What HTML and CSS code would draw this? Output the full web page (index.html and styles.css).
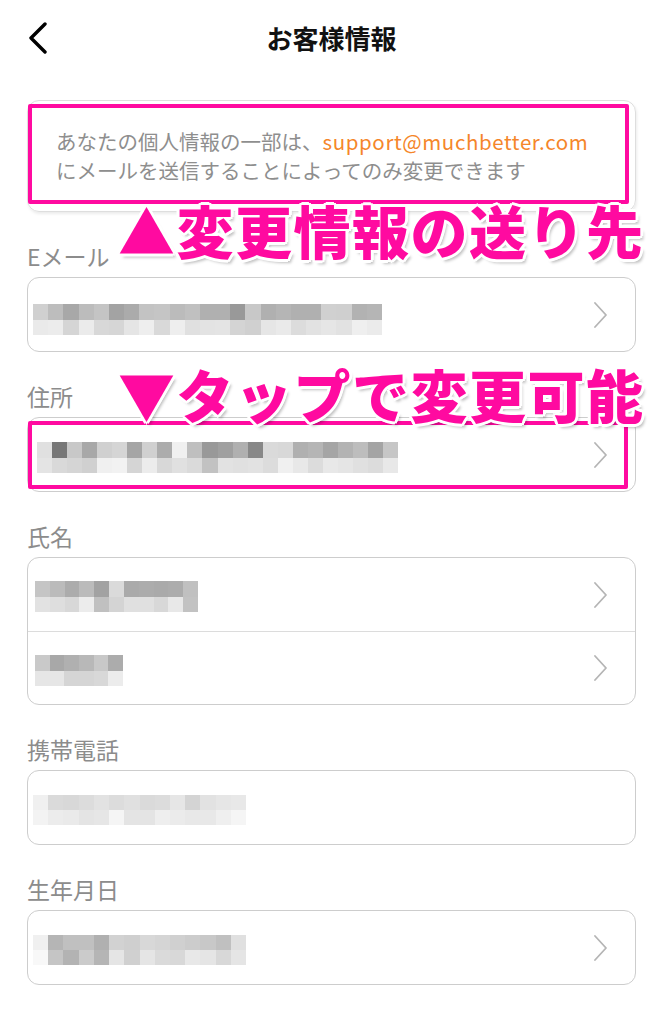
FILE: index.html
```html
<!DOCTYPE html>
<html lang="ja">

<head>
  <meta charset="UTF-8">
  <title>お客様情報</title>
  <link rel="stylesheet" href="styles.css">
</head>

<body>
  <div class="page">
    <header class="header">
      <svg class="back" width="20" height="32" viewBox="0 0 20 32">
        <polyline points="17,2 3,16 17,30" fill="none" stroke="#000" stroke-width="3.4" stroke-linecap="round" stroke-linejoin="round" />
      </svg>
      <h1 class="title">お客様情報</h1>
    </header>

    <main class="content">
      <!-- お知らせ -->
      <div class="notice">
        <p>あなたの個人情報の一部は、<span class="mail">support@muchbetter.com</span><br>にメールを送信することによってのみ変更できます</p>
        <div class="mark mark_notice"></div>
      </div>

      <section class="group">
        <h2 class="label">Eメール</h2>
        <div class="field">
          <div class="row">
            <svg class="mosaic" width="349" height="31" viewBox="0 0 23 2" preserveAspectRatio="none" shape-rendering="crispEdges">
              <rect x="0" y="0" width="1" height="1" fill="#d0d0d0"/><rect x="1" y="0" width="1" height="1" fill="#bdbdbd"/><rect x="2" y="0" width="1" height="1" fill="#a8a8a8"/><rect x="3" y="0" width="1" height="1" fill="#bcbcbc"/><rect x="4" y="0" width="1" height="1" fill="#c4c4c4"/><rect x="5" y="0" width="1" height="1" fill="#a3a3a3"/><rect x="6" y="0" width="1" height="1" fill="#ababab"/><rect x="7" y="0" width="1" height="1" fill="#c3c3c3"/><rect x="8" y="0" width="1" height="1" fill="#c5c5c5"/><rect x="9" y="0" width="1" height="1" fill="#bbbbbb"/><rect x="10" y="0" width="1" height="1" fill="#c0c0c0"/><rect x="11" y="0" width="1" height="1" fill="#b0b0b0"/>
              <rect x="12" y="0" width="1" height="1" fill="#b0b0b0"/><rect x="13" y="0" width="1" height="1" fill="#999999"/><rect x="14" y="0" width="1" height="1" fill="#c8c8c8"/><rect x="15" y="0" width="1" height="1" fill="#b0b0b0"/><rect x="16" y="0" width="1" height="1" fill="#b5b5b5"/><rect x="17" y="0" width="1" height="1" fill="#b0b0b0"/><rect x="18" y="0" width="1" height="1" fill="#b0b0b0"/><rect x="19" y="0" width="1" height="1" fill="#d0d0d0"/><rect x="20" y="0" width="1" height="1" fill="#cfcfcf"/><rect x="21" y="0" width="1" height="1" fill="#b2b2b2"/><rect x="22" y="0" width="1" height="1" fill="#b5b5b5"/>
              <rect x="0" y="1" width="1" height="1" fill="#eaeaea"/><rect x="1" y="1" width="1" height="1" fill="#ececec"/><rect x="2" y="1" width="1" height="1" fill="#d5d5d5"/><rect x="3" y="1" width="1" height="1" fill="#ebebeb"/><rect x="4" y="1" width="1" height="1" fill="#d8d8d8"/><rect x="5" y="1" width="1" height="1" fill="#d6d6d6"/><rect x="6" y="1" width="1" height="1" fill="#e5e5e5"/><rect x="7" y="1" width="1" height="1" fill="#eeeeee"/><rect x="8" y="1" width="1" height="1" fill="#d9d9d9"/><rect x="9" y="1" width="1" height="1" fill="#eeeeee"/><rect x="10" y="1" width="1" height="1" fill="#e0e0e0"/><rect x="11" y="1" width="1" height="1" fill="#e3e3e3"/>
              <rect x="12" y="1" width="1" height="1" fill="#e4e4e4"/><rect x="13" y="1" width="1" height="1" fill="#d4d4d4"/><rect x="14" y="1" width="1" height="1" fill="#d0d0d0"/><rect x="15" y="1" width="1" height="1" fill="#e6e6e6"/><rect x="16" y="1" width="1" height="1" fill="#eaeaea"/><rect x="17" y="1" width="1" height="1" fill="#dcdcdc"/><rect x="18" y="1" width="1" height="1" fill="#e2e2e2"/><rect x="19" y="1" width="1" height="1" fill="#e6e6e6"/><rect x="20" y="1" width="1" height="1" fill="#e2e2e2"/><rect x="21" y="1" width="1" height="1" fill="#efefef"/><rect x="22" y="1" width="1" height="1" fill="#ebebeb"/>
            </svg>
            <svg class="chevron" width="14" height="26" viewBox="0 0 14 26"><polyline points="2,1 13,13 2,25" fill="none" stroke="#b5b5b5" stroke-width="1.8" stroke-linecap="round" stroke-linejoin="round" /></svg>
          </div>
        </div>
      </section>

      <section class="group">
        <h2 class="label">住所</h2>
        <div class="field">
          <div class="row">
            <svg class="mosaic mosaic_addr" width="361" height="31" viewBox="0 0 24 2" preserveAspectRatio="none" shape-rendering="crispEdges">
              <rect x="0" y="0" width="1" height="1" fill="#e0e0e0"/><rect x="1" y="0" width="1" height="1" fill="#777777"/><rect x="2" y="0" width="1" height="1" fill="#c8c8c8"/><rect x="3" y="0" width="1" height="1" fill="#a8a8a8"/><rect x="4" y="0" width="1" height="1" fill="#d0d0d0"/><rect x="5" y="0" width="1" height="1" fill="#d5d5d5"/><rect x="6" y="0" width="1" height="1" fill="#a5a5a5"/><rect x="7" y="0" width="1" height="1" fill="#d0d0d0"/><rect x="8" y="0" width="1" height="1" fill="#acacac"/><rect x="9" y="0" width="1" height="1" fill="#f0f0f0"/><rect x="10" y="0" width="1" height="1" fill="#bfbfbf"/><rect x="11" y="0" width="1" height="1" fill="#999999"/>
              <rect x="12" y="0" width="1" height="1" fill="#a0a0a0"/><rect x="13" y="0" width="1" height="1" fill="#b0b0b0"/><rect x="14" y="0" width="1" height="1" fill="#888888"/><rect x="15" y="0" width="1" height="1" fill="#dadada"/><rect x="16" y="0" width="1" height="1" fill="#d8d8d8"/><rect x="17" y="0" width="1" height="1" fill="#b0b0b0"/><rect x="18" y="0" width="1" height="1" fill="#b5b5b5"/><rect x="19" y="0" width="1" height="1" fill="#a5a5a5"/><rect x="20" y="0" width="1" height="1" fill="#b3b3b3"/><rect x="21" y="0" width="1" height="1" fill="#bdbdbd"/><rect x="22" y="0" width="1" height="1" fill="#a4a4a4"/><rect x="23" y="0" width="1" height="1" fill="#c6c6c6"/>
              <rect x="0" y="1" width="1" height="1" fill="#e4e4e4"/><rect x="1" y="1" width="1" height="1" fill="#d9d9d9"/><rect x="2" y="1" width="1" height="1" fill="#d5d5d5"/><rect x="3" y="1" width="1" height="1" fill="#d0d0d0"/><rect x="4" y="1" width="1" height="1" fill="#f0f0f0"/><rect x="5" y="1" width="1" height="1" fill="#f2f2f2"/><rect x="6" y="1" width="1" height="1" fill="#d5d5d5"/><rect x="7" y="1" width="1" height="1" fill="#ececec"/><rect x="8" y="1" width="1" height="1" fill="#d8d8d8"/><rect x="9" y="1" width="1" height="1" fill="#e0e0e0"/><rect x="10" y="1" width="1" height="1" fill="#dadada"/><rect x="11" y="1" width="1" height="1" fill="#c2c2c2"/>
              <rect x="12" y="1" width="1" height="1" fill="#e2e2e2"/><rect x="13" y="1" width="1" height="1" fill="#e0e0e0"/><rect x="14" y="1" width="1" height="1" fill="#e2e2e2"/><rect x="15" y="1" width="1" height="1" fill="#dcdcdc"/><rect x="16" y="1" width="1" height="1" fill="#f0f0f0"/><rect x="17" y="1" width="1" height="1" fill="#e8e8e8"/><rect x="18" y="1" width="1" height="1" fill="#dcdcdc"/><rect x="19" y="1" width="1" height="1" fill="#e8e8e8"/><rect x="20" y="1" width="1" height="1" fill="#e5e5e5"/><rect x="21" y="1" width="1" height="1" fill="#e0e0e0"/><rect x="22" y="1" width="1" height="1" fill="#dcdcdc"/><rect x="23" y="1" width="1" height="1" fill="#e8e8e8"/>
            </svg>
            <svg class="chevron" width="14" height="26" viewBox="0 0 14 26"><polyline points="2,1 13,13 2,25" fill="none" stroke="#b5b5b5" stroke-width="1.8" stroke-linecap="round" stroke-linejoin="round" /></svg>
          </div>
        </div>
        <div class="mark mark_addr"></div>
      </section>

      <section class="group">
        <h2 class="label">氏名</h2>
        <div class="field">
          <div class="row">
            <svg class="mosaic mosaic_name" width="163" height="31" viewBox="0 0 11 2" preserveAspectRatio="none" shape-rendering="crispEdges">
              <rect x="0" y="0" width="1" height="1" fill="#c5c5c5"/><rect x="1" y="0" width="1" height="1" fill="#bbbbbb"/><rect x="2" y="0" width="1" height="1" fill="#acacac"/><rect x="3" y="0" width="1" height="1" fill="#bbbbbb"/><rect x="4" y="0" width="1" height="1" fill="#a2a2a2"/><rect x="5" y="0" width="1" height="1" fill="#dadada"/><rect x="6" y="0" width="1" height="1" fill="#aaaaaa"/><rect x="7" y="0" width="1" height="1" fill="#acacac"/><rect x="8" y="0" width="1" height="1" fill="#aaaaaa"/><rect x="9" y="0" width="1" height="1" fill="#acacac"/><rect x="10" y="0" width="1" height="1" fill="#c0c0c0"/>
              <rect x="0" y="1" width="1" height="1" fill="#e2e2e2"/><rect x="1" y="1" width="1" height="1" fill="#dedede"/><rect x="2" y="1" width="1" height="1" fill="#d8d8d8"/><rect x="3" y="1" width="1" height="1" fill="#ececec"/><rect x="4" y="1" width="1" height="1" fill="#c0c0c0"/><rect x="5" y="1" width="1" height="1" fill="#d4d4d4"/><rect x="6" y="1" width="1" height="1" fill="#e0e0e0"/><rect x="7" y="1" width="1" height="1" fill="#e0e0e0"/><rect x="8" y="1" width="1" height="1" fill="#d8d8d8"/><rect x="9" y="1" width="1" height="1" fill="#e8e8e8"/><rect x="10" y="1" width="1" height="1" fill="#c2c2c2"/>
            </svg>
            <svg class="chevron" width="14" height="26" viewBox="0 0 14 26"><polyline points="2,1 13,13 2,25" fill="none" stroke="#b5b5b5" stroke-width="1.8" stroke-linecap="round" stroke-linejoin="round" /></svg>
          </div>
          <div class="row">
            <svg class="mosaic mosaic_name" width="88" height="31" viewBox="0 0 6 2" preserveAspectRatio="none" shape-rendering="crispEdges">
              <rect x="0" y="0" width="1" height="1" fill="#c9c9c9"/><rect x="1" y="0" width="1" height="1" fill="#a8a8a8"/><rect x="2" y="0" width="1" height="1" fill="#b0b0b0"/><rect x="3" y="0" width="1" height="1" fill="#b8b8b8"/><rect x="4" y="0" width="1" height="1" fill="#c8c8c8"/><rect x="5" y="0" width="1" height="1" fill="#acacac"/>
              <rect x="0" y="1" width="1" height="1" fill="#e6e6e6"/><rect x="1" y="1" width="1" height="1" fill="#e6e6e6"/><rect x="2" y="1" width="1" height="1" fill="#d5d5d5"/><rect x="3" y="1" width="1" height="1" fill="#d5d5d5"/><rect x="4" y="1" width="1" height="1" fill="#d8d8d8"/><rect x="5" y="1" width="1" height="1" fill="#ececec"/>
            </svg>
            <svg class="chevron" width="14" height="26" viewBox="0 0 14 26"><polyline points="2,1 13,13 2,25" fill="none" stroke="#b5b5b5" stroke-width="1.8" stroke-linecap="round" stroke-linejoin="round" /></svg>
          </div>
        </div>
      </section>

      <section class="group">
        <h2 class="label">携帯電話</h2>
        <div class="field">
          <div class="row">
            <svg class="mosaic mosaic_short" width="213" height="30" viewBox="0 0 14 2" preserveAspectRatio="none" shape-rendering="crispEdges">
              <rect x="0" y="0" width="1" height="1" fill="#f0f0f0"/><rect x="1" y="0" width="1" height="1" fill="#dadada"/><rect x="2" y="0" width="1" height="1" fill="#d8d8d8"/><rect x="3" y="0" width="1" height="1" fill="#dcdcdc"/><rect x="4" y="0" width="1" height="1" fill="#e2e2e2"/><rect x="5" y="0" width="1" height="1" fill="#dcdcdc"/><rect x="6" y="0" width="1" height="1" fill="#e0e0e0"/><rect x="7" y="0" width="1" height="1" fill="#dadada"/><rect x="8" y="0" width="1" height="1" fill="#dcdcdc"/><rect x="9" y="0" width="1" height="1" fill="#e6e6e6"/><rect x="10" y="0" width="1" height="1" fill="#d4d4d4"/><rect x="11" y="0" width="1" height="1" fill="#e2e2e2"/><rect x="12" y="0" width="1" height="1" fill="#e6e6e6"/><rect x="13" y="0" width="1" height="1" fill="#e8e8e8"/>
              <rect x="0" y="1" width="1" height="1" fill="#f3f3f3"/><rect x="1" y="1" width="1" height="1" fill="#ececec"/><rect x="2" y="1" width="1" height="1" fill="#eaeaea"/><rect x="3" y="1" width="1" height="1" fill="#e4e4e4"/><rect x="4" y="1" width="1" height="1" fill="#e6e6e6"/><rect x="5" y="1" width="1" height="1" fill="#f5f5f5"/><rect x="6" y="1" width="1" height="1" fill="#e4e4e4"/><rect x="7" y="1" width="1" height="1" fill="#e4e4e4"/><rect x="8" y="1" width="1" height="1" fill="#eeeeee"/><rect x="9" y="1" width="1" height="1" fill="#ebebeb"/><rect x="10" y="1" width="1" height="1" fill="#e8e8e8"/><rect x="11" y="1" width="1" height="1" fill="#e8e8e8"/><rect x="12" y="1" width="1" height="1" fill="#efefef"/><rect x="13" y="1" width="1" height="1" fill="#f5f5f5"/>
            </svg>
          </div>
        </div>
      </section>

      <section class="group">
        <h2 class="label">生年月日</h2>
        <div class="field">
          <div class="row">
            <svg class="mosaic mosaic_short" width="213" height="30" viewBox="0 0 14 2" preserveAspectRatio="none" shape-rendering="crispEdges">
              <rect x="0" y="0" width="1" height="1" fill="#f0f0f0"/><rect x="1" y="0" width="1" height="1" fill="#b5b5b5"/><rect x="2" y="0" width="1" height="1" fill="#c0c0c0"/><rect x="3" y="0" width="1" height="1" fill="#c0c0c0"/><rect x="4" y="0" width="1" height="1" fill="#b0b0b0"/><rect x="5" y="0" width="1" height="1" fill="#d2d2d2"/><rect x="6" y="0" width="1" height="1" fill="#cfcfcf"/><rect x="7" y="0" width="1" height="1" fill="#d8d8d8"/><rect x="8" y="0" width="1" height="1" fill="#d5d5d5"/><rect x="9" y="0" width="1" height="1" fill="#d0d0d0"/><rect x="10" y="0" width="1" height="1" fill="#cccccc"/><rect x="11" y="0" width="1" height="1" fill="#c8c8c8"/><rect x="12" y="0" width="1" height="1" fill="#c0c0c0"/><rect x="13" y="0" width="1" height="1" fill="#e0e0e0"/>
              <rect x="0" y="1" width="1" height="1" fill="#f8f8f8"/><rect x="1" y="1" width="1" height="1" fill="#c5c5c5"/><rect x="2" y="1" width="1" height="1" fill="#b3b3b3"/><rect x="3" y="1" width="1" height="1" fill="#cbcbcb"/><rect x="4" y="1" width="1" height="1" fill="#b5b5b5"/><rect x="5" y="1" width="1" height="1" fill="#e5e5e5"/><rect x="6" y="1" width="1" height="1" fill="#d0d0d0"/><rect x="7" y="1" width="1" height="1" fill="#e5e5e5"/><rect x="8" y="1" width="1" height="1" fill="#dadada"/><rect x="9" y="1" width="1" height="1" fill="#d8d8d8"/><rect x="10" y="1" width="1" height="1" fill="#e8e8e8"/><rect x="11" y="1" width="1" height="1" fill="#e5e5e5"/><rect x="12" y="1" width="1" height="1" fill="#d8d8d8"/><rect x="13" y="1" width="1" height="1" fill="#e5e5e5"/>
            </svg>
            <svg class="chevron" width="14" height="26" viewBox="0 0 14 26"><polyline points="2,1 13,13 2,25" fill="none" stroke="#b5b5b5" stroke-width="1.8" stroke-linecap="round" stroke-linejoin="round" /></svg>
          </div>
        </div>
      </section>
    </main>

    <!-- 注釈 (スクショの上に重ねた文字) -->
    <p class="note note_send">▲変更情報の送り先</p>
    <p class="note note_tap">▼タップで変更可能</p>
  </div>
</body>

</html>
```

FILE: styles.css
```css
* {
  box-sizing: border-box;
  margin: 0;
  padding: 0;
}

body {
  background-color: #fff;
  font-family: "Noto Sans CJK JP", "Noto Sans", sans-serif;
  color: #111;
}

.page {
  position: relative;
  width: 663px;
  min-height: 1024px;
}

.header {
  position: relative;
  height: 76px;
  display: flex;
  align-items: center;
  justify-content: center;
}

.header .back {
  position: absolute;
  left: 28px;
  top: 22px;
}

.header .title {
  font-size: 26px;
  font-weight: bold;
  line-height: 1;
}

.content {
  padding: 24px 27px 0;
}

.notice {
  position: relative;
  border: 1.5px solid #dedede;
  border-radius: 12px;
  box-shadow: 1px 2px 3px rgba(0, 0, 0, 0.08);
  padding: 26px 28px;
  height: 112px;
}

.notice p {
  font-size: 20.5px;
  line-height: 29px;
  color: #8e8e8e;
  white-space: nowrap;
}

.notice .mail {
  color: #f5862a;
  letter-spacing: 0.6px;
}

.group {
  position: relative;
  margin-top: 30px;
}

.label {
  font-size: 23px;
  font-weight: normal;
  line-height: 28px;
  color: #8c8c8c;
  margin-bottom: 7px;
}

.field {
  border: 1.5px solid #cdcdcd;
  border-radius: 12px;
}

.row {
  height: 73px;
  display: flex;
  align-items: center;
  justify-content: space-between;
  padding: 0 28px 0 5px;
}

.row + .row {
  border-top: 1px solid #dcdcdc;
}

.mosaic {
  display: block;
  margin-top: 9px;
}

.mosaic_addr {
  margin-left: 4px;
  margin-top: 6px;
}

.mosaic_name {
  margin-left: 2px;
  margin-top: 4px;
}

.mosaic_short {
  margin-top: 4px;
}

.chevron {
  display: block;
  flex-shrink: 0;
}

/* ピンクの囲み */
.mark {
  position: absolute;
  border: 4px solid #ff0aa0;
  border-radius: 2px;
}

.mark_notice {
  left: 0;
  top: 3px;
  width: 601px;
  height: 100px;
}

.mark_addr {
  left: 1px;
  top: 39px;
  width: 600px;
  height: 68px;
}

/* 注釈の文字 */
.note {
  position: absolute;
  font-size: 57px;
  font-weight: 900;
  line-height: 1;
  color: #ff0aa0;
  letter-spacing: 1.5px;
  white-space: nowrap;
  text-shadow:
    3px 0 0 #fff, -3px 0 0 #fff, 0 3px 0 #fff, 0 -3px 0 #fff,
    2px 2px 0 #fff, -2px 2px 0 #fff, 2px -2px 0 #fff, -2px -2px 0 #fff,
    3px 4px 3px rgba(0, 0, 0, 0.25);
}

.note_send {
  left: 118px;
  top: 201px;
}

.note_tap {
  left: 118px;
  top: 365px;
}
```
